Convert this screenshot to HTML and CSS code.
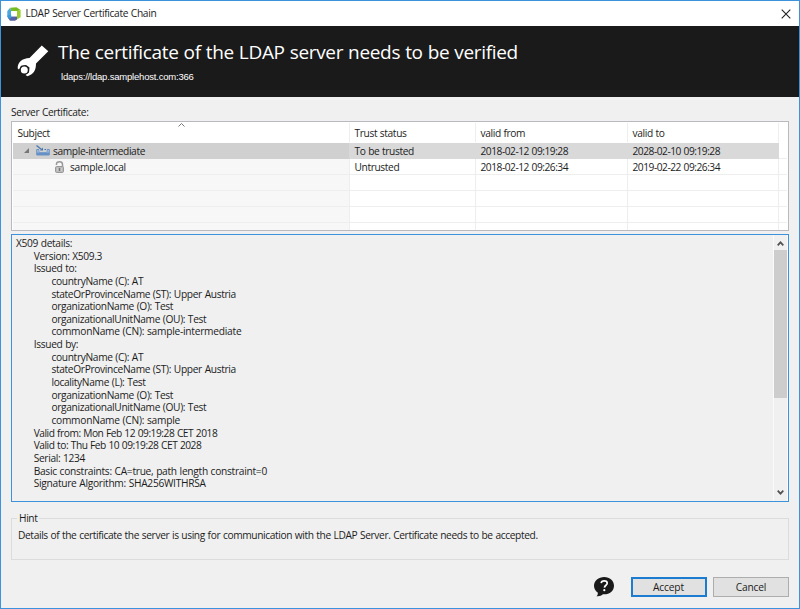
FILE: index.html
```html
<!DOCTYPE html>
<html lang="en">
<head>
<meta charset="utf-8">
<title>LDAP Server Certificate Chain</title>
<link rel="stylesheet" href="styles.css">
</head>
<body>
<div class="window">
  <header class="titlebar">
    <svg class="logo" viewBox="0 0 14 14"><path d="M3.2.8 9.5.3 13.6 3 10.2 4.2 4 4.2z" fill="#78bd20"/><path d="M13.6 3v7.2L10 12.6V4.2z" fill="#9acb2b"/><path d="M3.2.8 4.2 4.6v4.8L.3 10V4z" fill="#4ba6de"/><path d="M.3 9.8 4 9.2h6v3.4L8 13.7H3z" fill="#5560a5"/><path d="M4 4.2h6v5.2H4z" fill="#fff"/><path d="m.3 8.5 3.9-.7v3.4l-2.7.6z" fill="#329bdb"/></svg>
    <span class="title">LDAP Server Certificate Chain</span>
    <svg class="close" viewBox="0 0 10 10"><path d="m.7.7 8.6 8.6M9.3.7.7 9.3" stroke="#222" stroke-width="1.1"/></svg>
  </header>
  <section class="banner">
    <svg class="wrench" viewBox="0 0 32 32"><path d="M24.800.4 31.300 6.300 19 18.500C19 25 17 29 10.500 31.200L8.500 30 12 27.500 12.500 22.500 9 20 4 20.800 2 24.500.7 23.500C.5 17.500 5 13.300 12.500 13z" fill="#fff"/><circle cx="7.300" cy="25" r="4.600" fill="#1a1a1a"/><circle cx="7.300" cy="25" r="3.500" fill="#fff"/></svg>
    <div class="headings">
      <h1>The certificate of the LDAP server needs to be verified</h1>
      <p>ldaps://ldap.samplehost.com:366</p>
    </div>
  </section>
  <main>
    <div class="label">Server Certificate:</div>
    <div class="table">
      <div class="row head"><div><svg class="sort" viewBox="0 0 7 4"><path d="m.5 3.500 3-3 3 3" fill="none" stroke="#777"/></svg>Subject</div><div>Trust status</div><div>valid from</div><div>valid to</div><div></div></div>
      <div class="row selected"><div class="parent"><svg class="twisty" viewBox="0 0 5 5"><path d="M5 0v5H0z" fill="#777"/></svg><svg class="ca" viewBox="0 0 14 11"><path d="M.7 10V4.500H3V7h8V4.500h2.300V10z" fill="#a9c1e0" stroke="#6a92c4"/><path d="M1 7.500h12V10H1z" fill="#6791c5"/><path d="M3.500 4h7v3h-7z" fill="#d0d0d0"/><path d="m.5.5 5 4" stroke="#4776af" stroke-width="1.200"/><path d="M4 5.500h3V2.500z" fill="#4776af"/><path d="M8.500 4.500h1.500" stroke="#4776af"/></svg>sample-intermediate</div><div>To be trusted</div><div class="date">2018-02-12 09:19:28</div><div class="date">2028-02-10 09:19:28</div><div></div></div>
      <div class="row"><div class="child"><svg class="lock" viewBox="0 0 9 12"><path d="M1.500 4V3Q1.500.8 4.500.8T7.500 3.500V6" fill="none" stroke="#999" stroke-width="1.500"/><rect x=".5" y="5.500" width="8" height="6" rx="1.200" fill="#bbb" stroke="#999"/><path d="M2.500 7v3M6.500 7v3" stroke="#ccc"/><path d="M4.500 7v3" stroke="#777" stroke-width="1.300"/></svg>sample.local</div><div>Untrusted</div><div class="date">2018-02-12 09:26:34</div><div class="date">2019-02-22 09:26:34</div><div></div></div>
      <div class="row"><div></div><div></div><div></div><div></div><div></div></div>
      <div class="row"><div></div><div></div><div></div><div></div><div></div></div>
      <div class="row"><div></div><div></div><div></div><div></div><div></div></div>
      <div class="row last"><div></div><div></div><div></div><div></div><div></div></div>
    </div>
    <div class="details">
      <div class="text">
        <div>X509 details:</div>
        <div class="l1">Version: X509.3</div>
        <div class="l1">Issued to:</div>
        <div class="l2">countryName (C): AT</div>
        <div class="l2">stateOrProvinceName (ST): Upper Austria</div>
        <div class="l2">organizationName (O): Test</div>
        <div class="l2">organizationalUnitName (OU): Test</div>
        <div class="l2 wide">commonName (CN): sample-intermediate</div>
        <div class="l1">Issued by:</div>
        <div class="l2">countryName (C): AT</div>
        <div class="l2">stateOrProvinceName (ST): Upper Austria</div>
        <div class="l2">localityName (L): Test</div>
        <div class="l2">organizationName (O): Test</div>
        <div class="l2">organizationalUnitName (OU): Test</div>
        <div class="l2 wide">commonName (CN): sample</div>
        <div class="l1 validity">Valid from: Mon Feb 12 09:19:28 CET 2018</div>
        <div class="l1 validity">Valid to: Thu Feb 10 09:19:28 CET 2028</div>
        <div class="l1">Serial: 1234</div>
        <div class="l1 wide2">Basic constraints: CA=true, path length constraint=0</div>
        <div class="l1 wide2">Signature Algorithm: SHA256WITHRSA</div>
      </div>
      <div class="scrollbar">
        <svg viewBox="0 0 7 5"><path d="m.7 4.300 2.800-3 2.800 3" fill="none" stroke="#505050" stroke-width="1.700"/></svg>
        <div class="thumb"></div>
        <svg class="down" viewBox="0 0 7 5"><path d="m.7.7 2.800 3 2.800-3" fill="none" stroke="#505050" stroke-width="1.700"/></svg>
      </div>
    </div>
    <fieldset>
      <legend>Hint</legend>
      <p>Details of the certificate the server is using for communication with the LDAP Server. Certificate needs to be accepted.</p>
    </fieldset>
    <footer>
      <svg class="help" viewBox="0 0 20 20"><path d="M10.200 0C15.800 0 20 3.700 20 8.700S15.800 17.300 10.200 17.300H9C7.500 18.800 5 19.600 2.500 19.200 3.800 18.200 4 17 3.700 15.500 1.300 13.800 0 11.500 0 8.700 0 3.700 4.600 0 10.200 0z" fill="#1a1a1a"/><path d="M7.200 6.100C7.400 3.200 13.200 3.200 13.200 6.200 13.200 8.200 10.600 8.300 10.400 10.600" fill="none" stroke="#fff" stroke-width="1.700"/><circle cx="10.300" cy="13.200" r="1.100" fill="#fff"/></svg>
      <button class="primary">Accept</button>
      <button>Cancel</button>
    </footer>
  </main>
</div>
</body>
</html>
```

FILE: styles.css
```css
* { box-sizing: border-box; }
body { margin: 0; font: 10.2px/16px "Open Sans", "Noto Sans", sans-serif; letter-spacing: -.37px; word-spacing: .4px; color: #1c1c1c; }
svg { display: block; flex: none; }
.window { width: 800px; height: 609px; border: 1px solid #3b93dd; background: #f0f0f0; display: flex; flex-direction: column; }
.titlebar { height: 25px; background: #fff; display: flex; align-items: center; padding: 0 8px 0 6px; }
.logo { width: 14px; height: 14px; }
.title { margin-left: 4.5px; flex: 1; color: #222; letter-spacing: -.33px; line-height: 15px; padding-bottom: 1px; }
.close { width: 10px; height: 10px; }
.banner { height: 71px; background: #1a1a1a; display: flex; padding: 19px 0 0 16px; color: #fff; }
.wrench { width: 32px; height: 32px; }
.headings { margin-left: 9px; }
h1 { margin: -6px 0 0; font-size: 19px; line-height: 26px; font-weight: 400; letter-spacing: -.33px; white-space: nowrap; }
.headings p { margin: 6px 0 0 3px; font: 9.5px/12px "Liberation Sans", sans-serif; letter-spacing: -.2px; }
main { flex: 1; padding: 7px 10px 0; display: flex; flex-direction: column; }
.label { height: 17px; line-height: 16px; }
.table { height: 110px; border: 1px solid #b9babf; background: #fff; padding: 1px; overflow: hidden; }
.row { display: grid; grid-template-columns: 337px 126px 152px 151px 1fr; height: 16px; line-height: 16px; white-space: nowrap; }
.row > div { border-right: 1px solid #eee; border-bottom: 1px solid #eee; padding-left: 4.5px; height: 16px; }
.row > div:first-child { background: #f7f7f7; }
.row > div:last-child { border-right: 0; }
.row > .date { letter-spacing: -.47px; }
.row.head { height: 20px; line-height: 20px; }
.row.head > div { height: 20px; background: #fff; position: relative; border-bottom-color: #fff; }
.row.selected > div:not(:last-child) { background: #d9d9d9; border-color: #d9d9d9; }
.row.selected > div:first-child { background: #d0d0d0; border-bottom-color: #d0d0d0; }
.sort { position: absolute; left: 165px; top: 0; width: 7px; height: 4px; }
.row .parent { display: flex; align-items: center; padding-left: 11px; }
.twisty { width: 5px; height: 5px; margin-right: 7px; }
.ca { width: 14px; height: 11px; margin-right: 3px; }
.row .child { display: flex; align-items: center; padding-left: 42px; letter-spacing: -.26px; }
.lock { width: 9px; height: 12px; margin-right: 6px; }
.details { margin-top: 3px; height: 268px; border: 1px solid #3b93dd; display: flex; }
.text { flex: 1; padding: 2px 0 0 4px; line-height: 12.64px; white-space: nowrap; letter-spacing: -.33px; }
.l1 { padding-left: 17.7px; }
.l2 { padding-left: 35.4px; }
.validity { letter-spacing: -.46px; }
.wide { letter-spacing: -.24px; }
.wide2 { letter-spacing: -.28px; }
.scrollbar { width: 15px; border-left: 1px solid #fafafa; border-right: 1px solid #fafafa; display: flex; flex-direction: column; align-items: center; padding: 6px 0; }
.scrollbar svg { width: 7px; height: 5px; }
.thumb { width: 13px; height: 148px; background: #cdcdcd; margin-top: 4px; }
.down { margin-top: auto; }
fieldset { margin: 8px 0 0; border: 1px solid #dcdcdc; padding: 0 6px; height: 50px; min-width: 0; }
legend { padding: 0 2px; margin-left: -1px; }
fieldset p { margin: 1px 0 0; white-space: nowrap; }
footer { display: flex; justify-content: flex-end; margin-top: 17px; height: 20px; }
.help { width: 20px; height: 20px; margin-right: 17px; }
button { width: 76px; height: 20px; padding: 0; margin: 0; font: inherit; letter-spacing: -.15px; line-height: 16px; color: inherit; background: #e1e1e1; border: 1px solid #adadad; }
button.primary { border: 2px solid #1c7cd0; margin-right: 6.5px; }
```
